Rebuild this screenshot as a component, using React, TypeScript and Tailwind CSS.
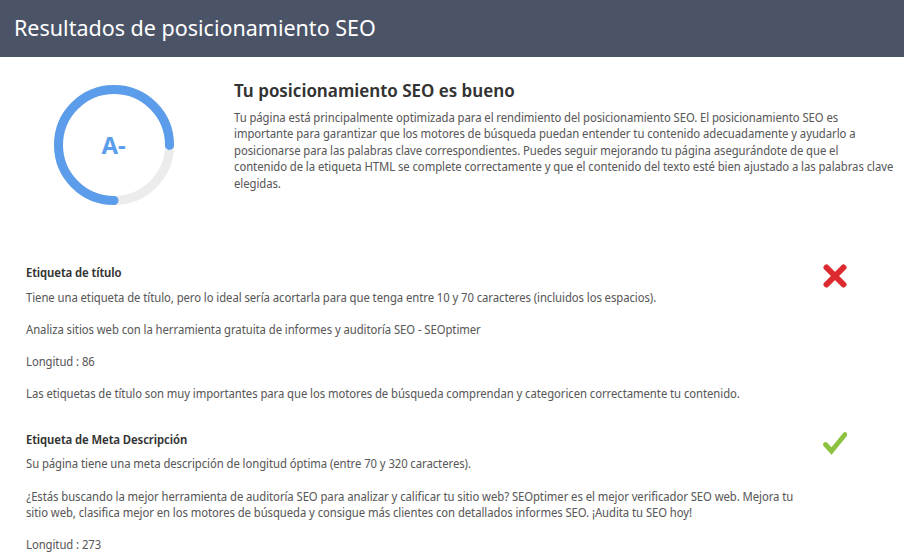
function Gauge() {
  const r = 55.5;
  const c = 2 * Math.PI * r;
  return (
    <div className="relative w-[120px] h-[120px]">
      <svg width="120" height="120" viewBox="0 0 120 120">
        <circle cx="60" cy="60" r={r} fill="none" stroke="#ececec" strokeWidth="9" />
        <circle
          cx="60"
          cy="60"
          r={r}
          fill="none"
          stroke="#5b9dea"
          strokeWidth="9"
          strokeLinecap="round"
          strokeDasharray={`${c * 0.75} ${c}`}
          transform="rotate(90 60 60)"
        />
      </svg>
      <div className="absolute inset-0 flex items-center justify-center">
        <span className="font-['Noto_Sans',sans-serif] font-bold text-[24px] leading-none text-[#5b9dea] -translate-x-[0.5px]">A-</span>
      </div>
    </div>
  );
}

function CrossIcon() {
  return (
    <svg width="24" height="24" viewBox="0 0 24 24">
      <path d="M3.5 3.5 L20.5 20.5 M20.5 3.5 L3.5 20.5" stroke="#dc2a2f" strokeWidth="6" strokeLinecap="round" fill="none" />
    </svg>
  );
}

function CheckIcon() {
  return (
    <svg width="24" height="24" viewBox="0 0 24 24">
      <path d="M2.5 13.5 L8.5 20 L22 3.5" stroke="#8cc23f" strokeWidth="4.8" strokeLinecap="round" strokeLinejoin="miter" fill="none" />
    </svg>
  );
}

function Section({ title, icon, children }: { title: string; icon: React.ReactNode; children: React.ReactNode }) {
  return (
    <div className="flex">
      <div className="flex-1">
        <h3 className="font-semibold text-[#333] mb-[8px]">{title}</h3>
        {children}
      </div>
      <div className="w-[24px] shrink-0 -mt-[1px]">{icon}</div>
    </div>
  );
}

export default function App() {
  return (
    <div className="bg-white min-h-[556px] font-['Noto_Sans_Display',sans-serif] text-[12px] leading-[16.5px] tracking-[-0.07px] text-[#595959]">
      <div className="h-[57px] bg-[#4b5467] flex items-center px-[14px]">
        <h1 className="font-['Noto_Sans',sans-serif] text-[21.5px] tracking-normal text-white leading-none -mt-[2px]">
          Resultados de posicionamiento SEO
        </h1>
      </div>

      <div className="flex pt-[21px]">
        <div className="w-[234px] shrink-0 pl-[54px] pt-[7px]">
          <Gauge />
        </div>
        <div className="flex-1 pr-[4px]">
          <h2 className="text-[18px] font-semibold leading-[24px] tracking-normal text-[#333] mb-[7.75px]">
            Tu posicionamiento SEO es bueno
          </h2>
          <p className="whitespace-nowrap">
            Tu página está principalmente optimizada para el rendimiento del posicionamiento SEO. El posicionamiento SEO es
            <br />
            importante para garantizar que los motores de búsqueda puedan entender tu contenido adecuadamente y ayudarlo a
            <br />
            posicionarse para las palabras clave correspondientes. Puedes seguir mejorando tu página asegurándote de que el
            <br />
            contenido de la etiqueta HTML se complete correctamente y que el contenido del texto esté bien ajustado a las palabras clave
            <br />
            elegidas.
          </p>
        </div>
      </div>

      <div className="pl-[26px] pr-[57px] mt-[60px]">
        <Section title="Etiqueta de título" icon={<CrossIcon />}>
          <p className="mb-[15.5px]">Tiene una etiqueta de título, pero lo ideal sería acortarla para que tenga entre 10 y 70 caracteres (incluidos los espacios).</p>
          <p className="mb-[15.5px]">Analiza sitios web con la herramienta gratuita de informes y auditoría SEO - SEOptimer</p>
          <p className="mb-[15.5px]">Longitud : 86</p>
          <p>Las etiquetas de título son muy importantes para que los motores de búsqueda comprendan y categoricen correctamente tu contenido.</p>
        </Section>
        <div className="h-[29.5px]" />
        <Section title="Etiqueta de Meta Descripción" icon={<CheckIcon />}>
          <p className="mb-[16px]">Su página tiene una meta descripción de longitud óptima (entre 70 y 320 caracteres).</p>
          <p className="mb-[15px] whitespace-nowrap">
            ¿Estás buscando la mejor herramienta de auditoría SEO para analizar y calificar tu sitio web? SEOptimer es el mejor verificador SEO web. Mejora tu
            <br />
            sitio web, clasifica mejor en los motores de búsqueda y consigue más clientes con detallados informes SEO. ¡Audita tu SEO hoy!
          </p>
          <p>Longitud : 273</p>
        </Section>
      </div>
    </div>
  );
}
